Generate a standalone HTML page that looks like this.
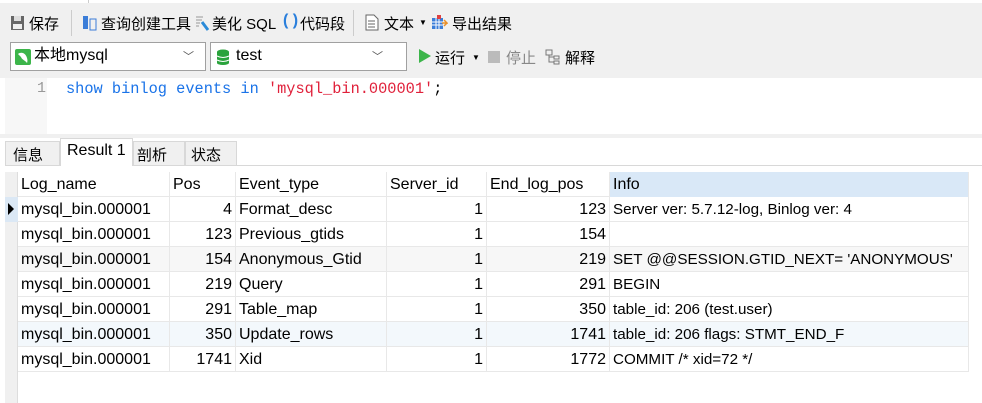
<!DOCTYPE html>
<html><head><meta charset="utf-8"><style>
*{margin:0;padding:0;box-sizing:border-box}
body{width:982px;height:403px;background:#fff;font-family:"Liberation Sans","Noto Sans CJK SC",sans-serif;font-size:14px;color:#000;position:relative;overflow:hidden}
.a{position:absolute;white-space:nowrap}
.t{font-size:15px}
.tb{position:absolute;left:0;top:0;width:982px;height:78px;background:#f0f0f0}
.sel{position:absolute;height:29px;background:#fff;border:1px solid #a0a0a0}
.grid{position:absolute;left:18px;top:172px}
.row{position:absolute;left:0;height:25px;width:951px;border-bottom:1px solid #e8e8e8}
.c{position:absolute;top:0;height:25px;line-height:25px;font-size:16px;padding:0 3px;border-right:1px solid #e8e8e8;overflow:hidden;white-space:nowrap}
.r{text-align:right}
.i{font-size:15.2px}
</style></head><body>
<div class="tb"></div>
<div class="a" style="left:0;top:0;width:982px;height:3px;background:#fff"></div>
<div class="a" style="left:88px;top:0;width:1px;height:3px;background:#ccc"></div>
<svg class="a" style="left:10px;top:15px" width="15" height="16"><rect x="1" y="1" width="13" height="14" fill="#666"/><rect x="4" y="1" width="7" height="5" fill="#ddd"/><rect x="3" y="9" width="9" height="5" fill="#eee"/></svg>
<div class="a t" style="left:29px;top:13px">保存</div>
<div class="a" style="left:71px;top:10px;width:1px;height:26px;background:#ccc"></div>
<svg class="a" style="left:82px;top:15px" width="15" height="16"><rect x="1" y="1" width="5" height="13" fill="#3b7dd8"/><rect x="8" y="4" width="6" height="11" fill="none" stroke="#3b7dd8"/></svg>
<div class="a t" style="left:101px;top:13px">查询创建工具</div>
<svg class="a" style="left:194px;top:14px" width="16" height="18"><path d="M2 3h7M2 6h6M2 9h4M2 12h3" stroke="#999"/><path d="M8 8l6 8" stroke="#2a8ad8" stroke-width="3"/></svg>
<div class="a t" style="left:212px;top:13px">美化 SQL</div>
<div class="a" style="left:283px;top:12px;font-size:16px;color:#2a7fdc;font-weight:bold">( )</div>
<div class="a t" style="left:300px;top:13px">代码段</div>
<div class="a" style="left:353px;top:10px;width:1px;height:26px;background:#ccc"></div>
<svg class="a" style="left:365px;top:14px" width="14" height="17"><path d="M1 1h8l4 4v11H1z" fill="#fff" stroke="#666"/><path d="M3 7h7M3 10h7M3 13h7" stroke="#666"/></svg>
<div class="a t" style="left:384px;top:13px">文本</div>
<div class="a" style="left:419px;top:18px;font-size:8px">▼</div>
<svg class="a" style="left:431px;top:14px" width="17" height="17"><rect x="1" y="4" width="11" height="11" fill="#3b7dd8"/><path d="M1 8h11M1 11h11M5 4v11M8 4v11" stroke="#fff"/><rect x="6" y="1" width="4" height="4" fill="#e04040"/><path d="M11 9h5l-3-3M16 9l-3 3" stroke="#e8902a" stroke-width="1.5" fill="none"/></svg>
<div class="a t" style="left:452px;top:13px">导出结果</div>
<div class="sel" style="left:10px;top:42px;width:196px"></div>
<svg class="a" style="left:15px;top:49px" width="16" height="16"><rect width="16" height="16" rx="2" fill="#3cb54a"/><path d="M3 5c4-3 8 0 9 4 1 3 0 5 0 5-2-3-5-3-6-6z" fill="#fff"/></svg>
<div class="a" style="left:34px;top:45px;font-size:16px;line-height:22px">本地mysql</div>
<div class="a" style="left:183px;top:48px;font-size:11px;color:#555">﹀</div>
<div class="sel" style="left:210px;top:42px;width:197px"></div>
<svg class="a" style="left:216px;top:49px" width="14" height="16"><ellipse cx="7" cy="3" rx="6" ry="2.5" fill="#2aa33c"/><rect x="1" y="3" width="12" height="11" fill="#2aa33c"/><ellipse cx="7" cy="14" rx="6" ry="2" fill="#2aa33c"/><path d="M1 7q6 3 12 0M1 11q6 3 12 0" stroke="#fff" fill="none"/></svg>
<div class="a" style="left:236px;top:47px;font-size:16px">test</div>
<div class="a" style="left:372px;top:48px;font-size:11px;color:#555">﹀</div>
<svg class="a" style="left:419px;top:49px" width="12" height="14"><path d="M0 0L12 7L0 14z" fill="#3cb54a"/></svg>
<div class="a t" style="left:435px;top:47px">运行</div>
<div class="a" style="left:472px;top:53px;font-size:8px">▼</div>
<div class="a" style="left:488px;top:51px;width:12px;height:12px;background:#bbb"></div>
<div class="a t" style="left:506px;top:47px;color:#888">停止</div>
<svg class="a" style="left:545px;top:49px" width="16" height="16"><rect x="1" y="1" width="6" height="5" fill="none" stroke="#777"/><rect x="9" y="7" width="5" height="3" fill="none" stroke="#777"/><rect x="9" y="12" width="5" height="3" fill="none" stroke="#777"/><path d="M4 6v7h5M4 8h5" stroke="#777" fill="none"/></svg>
<div class="a t" style="left:565px;top:47px">解释</div>
<div class="a" style="left:5px;top:78px;width:42px;height:56px;background:#f7f7f7"></div>
<div class="a" style="left:37px;top:80px;font-family:'Liberation Mono',monospace;font-size:15px;color:#999;line-height:18px">1</div>
<div class="a" style="left:66px;top:80px;font-family:'Liberation Mono',monospace;font-size:15.3px;line-height:18px"><span style="color:#1a73e8">show binlog events in </span><span style="color:#e0203a">'mysql_bin.000001'</span>;</div>
<div class="a" style="left:0;top:134px;width:982px;height:4px;background:#f0f0f0"></div>
<div class="a" style="left:5px;top:165px;width:977px;height:1px;background:#d8d8d8"></div>
<div class="a" style="left:5px;top:141px;width:55px;height:25px;background:#f0f0f0;border:1px solid #d8d8d8"></div>
<div class="a t" style="left:13px;top:144px">信息</div>
<div class="a" style="left:60px;top:138px;width:73px;height:28px;background:#fff;border:1px solid #d8d8d8;border-bottom:none"></div>
<div class="a t" style="left:67px;top:142px;font-size:16px">Result 1</div>
<div class="a" style="left:133px;top:141px;width:52px;height:25px;background:#f0f0f0;border:1px solid #d8d8d8"></div>
<div class="a t" style="left:137px;top:144px">剖析</div>
<div class="a" style="left:185px;top:141px;width:52px;height:25px;background:#f0f0f0;border:1px solid #d8d8d8"></div>
<div class="a t" style="left:191px;top:144px">状态</div>
<div class="a" style="left:5px;top:172px;width:13px;height:231px;background:#f0f0f0;border-right:1px solid #ddd"></div>
<div class="a" style="left:5px;top:197px;width:13px;height:25px;background:#dbe8f5"></div>
<div class="a" style="left:8px;top:203px;width:0;height:0;border-left:6px solid #000;border-top:6px solid transparent;border-bottom:6px solid transparent"></div>
<div class="grid">
<div class="row" style="top:0"><div class="c" style="left:0;width:152px">Log_name</div><div class="c" style="left:152px;width:66px">Pos</div><div class="c" style="left:218px;width:151px">Event_type</div><div class="c" style="left:369px;width:100px">Server_id</div><div class="c" style="left:469px;width:123px">End_log_pos</div><div class="c" style="left:592px;width:359px;background:#d9e8f7">Info</div></div>
<div class="row" style="top:25px"><div class="c" style="left:0;width:152px">mysql_bin.000001</div><div class="c r" style="left:152px;width:66px">4</div><div class="c" style="left:218px;width:151px">Format_desc</div><div class="c r" style="left:369px;width:100px">1</div><div class="c r" style="left:469px;width:123px">123</div><div class="c i" style="left:592px;width:359px">Server ver: 5.7.12-log, Binlog ver: 4</div></div>
<div class="row" style="top:50px"><div class="c" style="left:0;width:152px">mysql_bin.000001</div><div class="c r" style="left:152px;width:66px">123</div><div class="c" style="left:218px;width:151px">Previous_gtids</div><div class="c r" style="left:369px;width:100px">1</div><div class="c r" style="left:469px;width:123px">154</div><div class="c" style="left:592px;width:359px"></div></div>
<div class="row" style="top:75px;background:#f7f7f7"><div class="c" style="left:0;width:152px">mysql_bin.000001</div><div class="c r" style="left:152px;width:66px">154</div><div class="c" style="left:218px;width:151px">Anonymous_Gtid</div><div class="c r" style="left:369px;width:100px">1</div><div class="c r" style="left:469px;width:123px">219</div><div class="c i" style="left:592px;width:359px">SET @@SESSION.GTID_NEXT= 'ANONYMOUS'</div></div>
<div class="row" style="top:100px"><div class="c" style="left:0;width:152px">mysql_bin.000001</div><div class="c r" style="left:152px;width:66px">219</div><div class="c" style="left:218px;width:151px">Query</div><div class="c r" style="left:369px;width:100px">1</div><div class="c r" style="left:469px;width:123px">291</div><div class="c i" style="left:592px;width:359px">BEGIN</div></div>
<div class="row" style="top:125px"><div class="c" style="left:0;width:152px">mysql_bin.000001</div><div class="c r" style="left:152px;width:66px">291</div><div class="c" style="left:218px;width:151px">Table_map</div><div class="c r" style="left:369px;width:100px">1</div><div class="c r" style="left:469px;width:123px">350</div><div class="c i" style="left:592px;width:359px">table_id: 206 (test.user)</div></div>
<div class="row" style="top:150px;background:#f3f8fc"><div class="c" style="left:0;width:152px">mysql_bin.000001</div><div class="c r" style="left:152px;width:66px">350</div><div class="c" style="left:218px;width:151px">Update_rows</div><div class="c r" style="left:369px;width:100px">1</div><div class="c r" style="left:469px;width:123px">1741</div><div class="c i" style="left:592px;width:359px">table_id: 206 flags: STMT_END_F</div></div>
<div class="row" style="top:175px"><div class="c" style="left:0;width:152px">mysql_bin.000001</div><div class="c r" style="left:152px;width:66px">1741</div><div class="c" style="left:218px;width:151px">Xid</div><div class="c r" style="left:369px;width:100px">1</div><div class="c r" style="left:469px;width:123px">1772</div><div class="c i" style="left:592px;width:359px">COMMIT /* xid=72 */</div></div>
</div>
</body></html>
